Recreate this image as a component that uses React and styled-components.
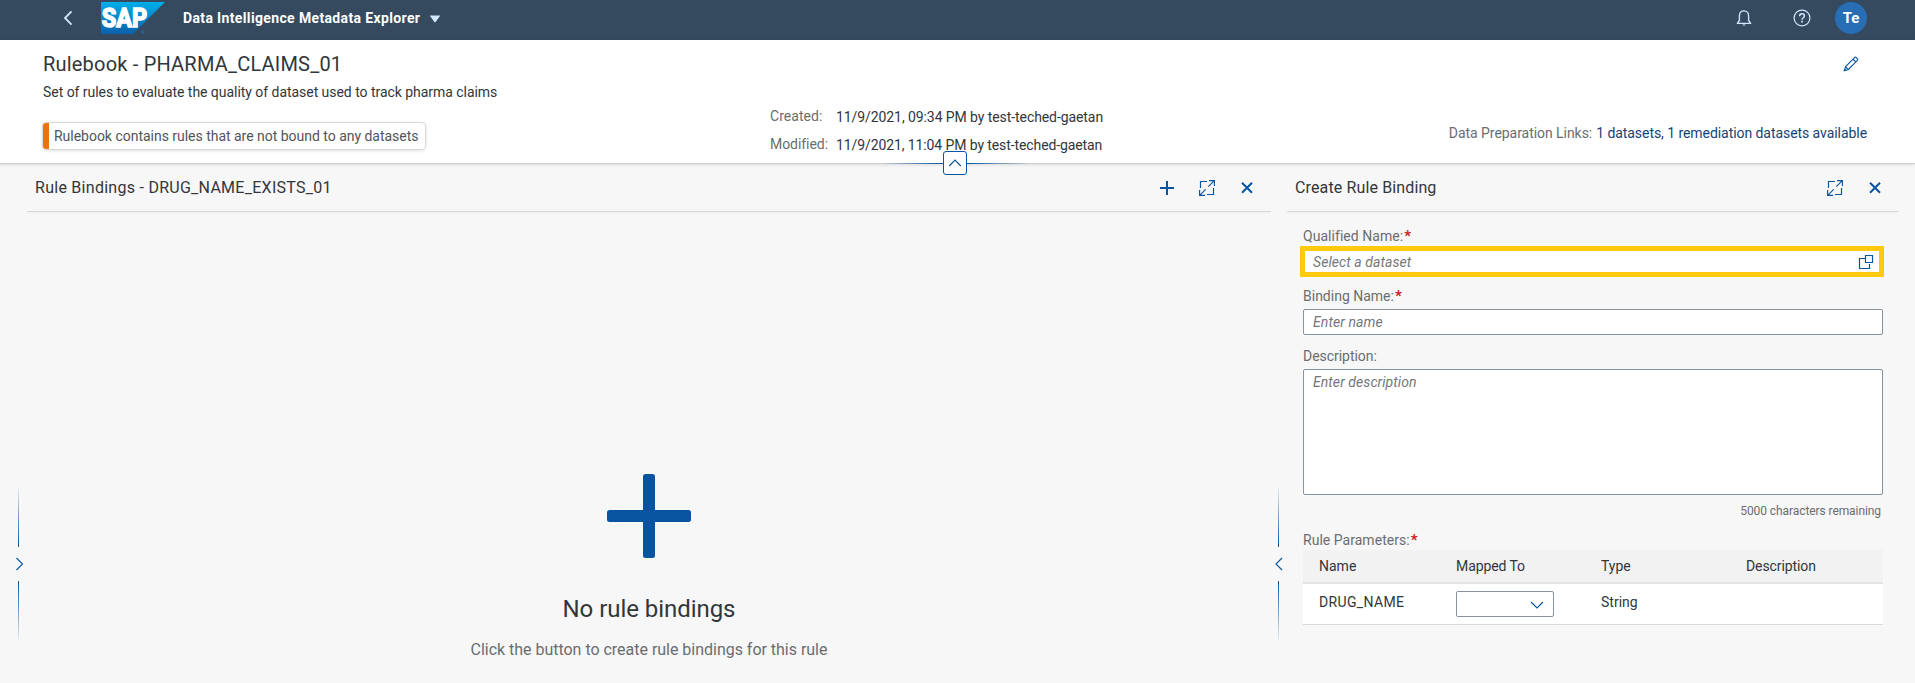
import React from "react";
import styled, { createGlobalStyle } from "styled-components";

const BLUE = "#0854a0";

const GlobalStyle = createGlobalStyle`
  * { box-sizing: border-box; }
  body {
    margin: 0;
    background: #f7f7f7;
    color: #32363a;
    font-family: Roboto, "Liberation Sans", sans-serif;
    font-size: 14px;
    overflow: hidden;
  }
`;

const Page = styled.div`
  display: flex;
  flex-direction: column;
  height: 683px;
`;

const Text = styled.span`
  letter-spacing: ${(p) => p.$track || 0}px;
  white-space: pre;
`;

/* Shell bar */
const ShellBar = styled.header`
  display: flex;
  align-items: center;
  flex: none;
  height: 40px;
  padding: 0 48px 4px 60px;
  background: #354a5f;
  color: #fff;
`;
const BackIcon = styled.svg`
  width: 16px;
  height: 16px;
  margin-right: 25px;
`;
const Logo = styled.svg`
  width: 64px;
  height: 32px;
  margin-right: 18px;
`;
const ProductMenu = styled.div`
  display: flex;
  align-items: center;
  gap: 9px;
  font-weight: 700;
  line-height: 20px;
`;
const MenuArrow = styled.svg`
  width: 12px;
  height: 8px;
  margin-top: 2px;
`;
const ShellActions = styled.div`
  display: flex;
  align-items: center;
  margin-left: auto;
`;
const ShellIcon = styled.svg`
  width: 18px;
  height: 18px;
  margin-right: ${(p) => p.$after}px;
`;
const Avatar = styled.div`
  width: 32px;
  height: 32px;
  border-radius: 50%;
  background: #286eb4;
  font-size: 15px;
  font-weight: 700;
  line-height: 32px;
  text-align: center;
`;

/* Object header */
const ObjectHeader = styled.section`
  position: relative;
  z-index: 1;
  display: grid;
  grid-template-columns: 727px 1fr auto;
  flex: none;
  height: 124px;
  padding: 12px 48px 0 43px;
  background: #fff;
  border-bottom: 1px solid #d0d0d0;
  box-shadow: 0 1px 3px rgba(0, 0, 0, 0.12);
`;
const Title = styled.h1`
  margin: 0 0 6px;
  font-size: 20px;
  font-weight: 400;
  line-height: 24px;
`;
const Subtitle = styled.p`
  margin: 0 0 20px;
  line-height: 20px;
`;
const Notice = styled.div`
  display: inline-flex;
  width: 384px;
  height: 28px;
  margin-left: -1px;
  overflow: hidden;
  border: 1px solid #d9d9d9;
  border-radius: 4px;
  box-shadow: 0 1px 3px rgba(0, 0, 0, 0.12);
  color: #51555a;
  line-height: 27px;
`;
const NoticeMark = styled.span`
  width: 6px;
  margin-right: 5px;
  background: #e9730c;
`;
const Facts = styled.dl`
  display: grid;
  grid-template-columns: 66px auto;
  grid-auto-rows: 28px;
  justify-content: start;
  margin: 54px 0 0;
  line-height: 20px;
`;
const FactLabel = styled.dt`
  color: #6a6d70;
`;
const FactValue = styled.dd`
  margin: 0;
  padding-top: 1px;
`;
const HeaderSide = styled.div`
  display: flex;
  flex-direction: column;
  align-items: flex-end;
  gap: 51px;
  color: #6a6d70;
  line-height: 20px;
`;
const EditIcon = styled.svg`
  width: 16px;
  height: 16px;
  margin: 4px 8px 0 0;
`;
const Link = styled.a`
  margin-left: 4px;
  color: #154377;
`;
const Collapse = styled.div`
  position: absolute;
  left: 880px;
  bottom: -12px;
  display: flex;
  align-items: center;
  width: 150px;
`;
const CollapseLine = styled.span`
  flex: 1;
  height: 1px;
  background: linear-gradient(${(p) => p.$to}, transparent, ${BLUE});
`;
const CollapseButton = styled.button`
  display: flex;
  align-items: center;
  justify-content: center;
  width: 24px;
  height: 24px;
  padding: 0;
  background: #fff;
  border: 1px solid ${BLUE};
  border-radius: 3px;
`;

/* Work area */
const Work = styled.main`
  display: grid;
  grid-template-columns: 27px 1244px 16px 612px;
  flex: 1;
`;
const Splitter = styled.div`
  display: flex;
  flex-direction: column;
  align-items: center;
  width: 15px;
  margin-left: ${(p) => p.$inset}px;
  padding-top: 324px;
`;
const SplitterLine = styled.span`
  width: 1px;
  height: 59px;
  background: linear-gradient(${(p) => p.$to}, rgba(8, 84, 160, 0.08), ${BLUE});
`;
const SplitterArrow = styled.svg`
  width: 14px;
  height: 14px;
  margin: 10px 0;
`;
const Panel = styled.section`
  display: flex;
  flex-direction: column;
`;
const PanelBar = styled.div`
  display: flex;
  align-items: center;
  gap: 24px;
  height: 48px;
  padding: 0 16px 0 8px;
  border-bottom: 1px solid #d9d9d9;
  box-shadow: 0 2px 2px -1px rgba(0, 0, 0, 0.04);
`;
const PanelTitle = styled.h2`
  flex: 1;
  margin: 0;
  font-size: 16px;
  font-weight: 400;
  line-height: 20px;
`;
const ToolIcon = styled.svg`
  width: 16px;
  height: 16px;
`;

const Empty = styled.div`
  display: flex;
  flex-direction: column;
  align-items: center;
  padding-top: 262px;
`;
const BigPlus = styled.svg`
  width: 84px;
  height: 84px;
`;
const EmptyTitle = styled.h3`
  margin: 35px 0 13px;
  font-size: 24px;
  font-weight: 400;
  line-height: 32px;
`;
const EmptyHint = styled.p`
  margin: 0;
  color: #6a6d70;
  font-size: 16px;
  line-height: 24px;
`;

/* Form */
const Form = styled.form`
  display: flex;
  flex-direction: column;
  gap: 12px;
  padding: 15px 16px 0;
`;
const Field = styled.div`
  display: flex;
  flex-direction: column;
`;
const Label = styled.label`
  display: flex;
  gap: 1px;
  margin-bottom: ${(p) => (p.$tight ? 1 : 4)}px;
  color: #6a6d70;
  line-height: 18px;
`;
const Required = styled.span`
  color: #cc1919;
  font-size: 15px;
  font-weight: 700;
`;
const Input = styled.div`
  display: flex;
  align-items: center;
  justify-content: space-between;
  height: 26px;
  padding: 0 8px 0 9px;
  background: #fff;
  border: 1px solid #89919a;
  border-radius: 2px;
  color: #74777a;
  font-style: italic;
`;
const HighlightedInput = styled(Input)`
  height: 31px;
  margin: -3px -1px -2px -3px;
  padding: 0 5px 0 8px;
  border: 5px solid #ffc90e;
  border-radius: 0;
`;
const TextArea = styled(Input)`
  align-items: flex-start;
  height: 126px;
  padding-top: 3px;
  line-height: 18px;
`;
const Counter = styled.div`
  margin-top: 8px;
  padding-right: 2px;
  color: #6a6d70;
  font-size: 12px;
  line-height: 16px;
  text-align: right;
`;
const TableRow = styled.div`
  display: grid;
  grid-template-columns: 137px 145px 145px 1fr;
  padding-left: 16px;
`;
const TableHead = styled(TableRow)`
  height: 34px;
  background: #f2f2f2;
  border-bottom: 2px solid #e4e4e4;
  line-height: 32px;
`;
const TableBody = styled(TableRow)`
  height: 41px;
  padding-top: 7px;
  background: #fff;
  border-bottom: 1px solid #d9d9d9;
  line-height: 22px;
`;
const Select = styled.div`
  display: flex;
  align-items: center;
  justify-content: flex-end;
  width: 98px;
  height: 26px;
  padding-right: 9px;
  background: #fff;
  border: 1px solid #89919a;
  border-radius: 2px;
`;
const SelectArrow = styled.svg`
  width: 14px;
  height: 8px;
  margin-top: 2px;
`;

const ExpandIcon = () => (
  <ToolIcon viewBox="0 0 16 16" fill="none" stroke={BLUE} strokeWidth="1.15">
    <path d="M8 1.5H1.5V8M8 14.5h6.500V8M10 .6h5.400V6M15.300 .7 9.300 6.700M.6 10v5.400H6M.7 15.300l6-6" />
  </ToolIcon>
);
const CloseIcon = () => (
  <ToolIcon viewBox="0 0 16 16" stroke={BLUE} strokeWidth="2">
    <path d="M3 2.700 13 12.700M13 2.700 3 12.700" />
  </ToolIcon>
);

const RequiredLabel = ({ text, track, tight }) => (
  <Label $tight={tight}>
    <Text $track={track}>{text}</Text>
    <Required>*</Required>
  </Label>
);

export default function App() {
  return (
    <Page>
      <GlobalStyle />
      <ShellBar>
        <BackIcon viewBox="0 0 16 16" fill="none" stroke="#d1e8ff" strokeWidth="1.8">
          <path d="M11.500 1.300 5 8l6.500 6.700" />
        </BackIcon>
        <Logo viewBox="0 0 64 32">
          <defs>
            <linearGradient id="logo" x1="0" y1="0" x2="0" y2="1">
              <stop offset="0" stopColor="#00aeea" />
              <stop offset="1" stopColor="#0a61ab" />
            </linearGradient>
          </defs>
          <path d="M0 0H64L32 32H0Z" fill="url(#logo)" />
          <text x="0.800" y="25" fill="#fff" stroke="#fff" strokeWidth="1.500" fontSize="25" fontWeight="700" textLength="45.500" lengthAdjust="spacingAndGlyphs">SAP</text>
          <circle cx="42" cy="30" r="1.300" fill="none" stroke="#1b6fae" strokeWidth="0.900" />
        </Logo>
        <ProductMenu>
          <Text $track={0.36}>Data Intelligence Metadata Explorer</Text>
          <MenuArrow viewBox="0 0 12 8">
            <path d="M1.500 .5h9q.9 0 .3.800L6.600 7q-.6.700-1.200 0L1.200 1.300Q.6 .5 1.500 .5Z" fill="#d1e8ff" />
          </MenuArrow>
        </ProductMenu>
        <ShellActions>
          <ShellIcon $after={40} viewBox="0 0 18 18" fill="none" stroke="#d1e8ff" strokeWidth="1.300">
            <path d="M2.300 14.400h13.400L13.600 11.500V6.800c0-3-1.900-5-4.600-5s-4.600 2-4.600 5v4.700Z" strokeLinejoin="round" />
            <path d="M7.300 15.400h3.400L9 17Z" fill="#d1e8ff" stroke="none" />
          </ShellIcon>
          <ShellIcon $after={24} viewBox="0 0 18 18" fill="none" stroke="#d1e8ff" strokeWidth="1.200">
            <circle cx="9" cy="9" r="7.900" />
            <path d="M6.600 7.200c0-1.600 1-2.400 2.400-2.400s2.400.8 2.400 2.100c0 1.800-2.400 1.900-2.400 3.800" strokeWidth="1.500" />
            <path d="M9 11.800v1.700" strokeWidth="1.700" />
          </ShellIcon>
          <Avatar>
            <Text>Te</Text>
          </Avatar>
        </ShellActions>
      </ShellBar>

      <ObjectHeader>
        <div>
          <Title><Text $track={0.2}>Rulebook - PHARMA_CLAIMS_01</Text></Title>
          <Subtitle><Text $track={-0.04}>Set of rules to evaluate the quality of dataset used to track pharma claims</Text></Subtitle>
          <Notice>
            <NoticeMark />
            <Text $track={-0.02}>Rulebook contains rules that are not bound to any datasets</Text>
          </Notice>
        </div>
        <Facts>
          <FactLabel><Text $track={0.04}>Created:</Text></FactLabel>
          <FactValue><Text $track={-0.08}>11/9/2021, 09:34 PM by test-teched-gaetan</Text></FactValue>
          <FactLabel><Text $track={-0.05}>Modified:</Text></FactLabel>
          <FactValue><Text $track={-0.1}>11/9/2021, 11:04 PM by test-teched-gaetan</Text></FactValue>
        </Facts>
        <HeaderSide>
          <EditIcon viewBox="0 0 16 16" fill="none" stroke={BLUE} strokeWidth="1.100">
            <path d="M1.300 14.700 2.600 10.600 11.600 1.600q.8-.8 1.600 0l1.200 1.200q.8.8 0 1.600L5.400 13.400ZM10 3.200l2.800 2.800M2.700 10.800l2.500 2.500" />
            <path d="M1 15 1.800 12.600 3.400 14.200Z" fill={BLUE} stroke="none" />
          </EditIcon>
          <div>
            <Text $track={-0.05}>Data Preparation Links:</Text>
            <Link><Text $track={-0.06}>1 datasets, 1 remediation datasets available</Text></Link>
          </div>
        </HeaderSide>
        <Collapse>
          <CollapseLine $to="to right" />
          <CollapseButton type="button">
            <ToolIcon viewBox="0 0 16 16" fill="none" stroke={BLUE} strokeWidth="1.100">
              <path d="M2.200 11 8 5l5.800 6" />
            </ToolIcon>
          </CollapseButton>
          <CollapseLine $to="to left" />
        </Collapse>
      </ObjectHeader>

      <Work>
        <Splitter $inset={11}>
          <SplitterLine $to="to bottom" />
          <SplitterArrow viewBox="0 0 14 14" fill="none" stroke={BLUE} strokeWidth="1.100">
            <path d="M4.500 1l6 6-6 6" />
          </SplitterArrow>
          <SplitterLine $to="to top" />
        </Splitter>
        <Panel>
          <PanelBar>
            <PanelTitle><Text $track={0.27}>Rule Bindings - DRUG_NAME_EXISTS_01</Text></PanelTitle>
            <ToolIcon viewBox="0 0 16 16" stroke={BLUE} strokeWidth="2">
              <path d="M8 1v14M1 8h14" />
            </ToolIcon>
            <ExpandIcon />
            <CloseIcon />
          </PanelBar>
          <Empty>
            <BigPlus viewBox="0 0 84 84" fill={BLUE}>
              <rect x="36" width="12" height="84" rx="2.500" />
              <rect y="36" width="84" height="12" rx="2.500" />
            </BigPlus>
            <EmptyTitle><Text $track={-0.05}>No rule bindings</Text></EmptyTitle>
            <EmptyHint><Text $track={-0.02}>Click the button to create rule bindings for this rule</Text></EmptyHint>
          </Empty>
        </Panel>
        <Splitter $inset={0}>
          <SplitterLine $to="to bottom" />
          <SplitterArrow viewBox="0 0 14 14" fill="none" stroke={BLUE} strokeWidth="1.100">
            <path d="M10 1 4 7l6 6" />
          </SplitterArrow>
          <SplitterLine $to="to top" />
        </Splitter>
        <Panel>
          <PanelBar>
            <PanelTitle><Text $track={0.13}>Create Rule Binding</Text></PanelTitle>
            <ExpandIcon />
            <CloseIcon />
          </PanelBar>
          <Form>
            <Field>
              <RequiredLabel text="Qualified Name:" track={0.04} />
              <HighlightedInput>
                <Text $track={0.08}>Select a dataset</Text>
                <ToolIcon viewBox="0 0 16 16" fill="none" stroke={BLUE} strokeWidth="1.200">
                  <path d="M7.500 1.500h7v7h-7ZM7.500 4.500h-6v10h10V10" />
                </ToolIcon>
              </HighlightedInput>
            </Field>
            <Field>
              <RequiredLabel text="Binding Name:" track={0} />
              <Input><Text $track={0.1}>Enter name</Text></Input>
            </Field>
            <Field>
              <Label><Text $track={-0.04}>Description:</Text></Label>
              <TextArea><Text $track={0.07}>Enter description</Text></TextArea>
              <Counter><Text $track={-0.08}>5000 characters remaining</Text></Counter>
            </Field>
            <Field>
              <RequiredLabel tight text="Rule Parameters:" track={0.03} />
              <TableHead>
                <Text>Name</Text>
                <Text $track={-0.08}>Mapped To</Text>
                <Text>Type</Text>
                <Text $track={-0.1}>Description</Text>
              </TableHead>
              <TableBody>
                <Text $track={0.35}>DRUG_NAME</Text>
                <Select>
                  <SelectArrow viewBox="0 0 14 8" fill="none" stroke={BLUE} strokeWidth="1.100">
                    <path d="M1 1l6 6 6-6" />
                  </SelectArrow>
                </Select>
                <Text>String</Text>
              </TableBody>
            </Field>
          </Form>
        </Panel>
      </Work>
    </Page>
  );
}
